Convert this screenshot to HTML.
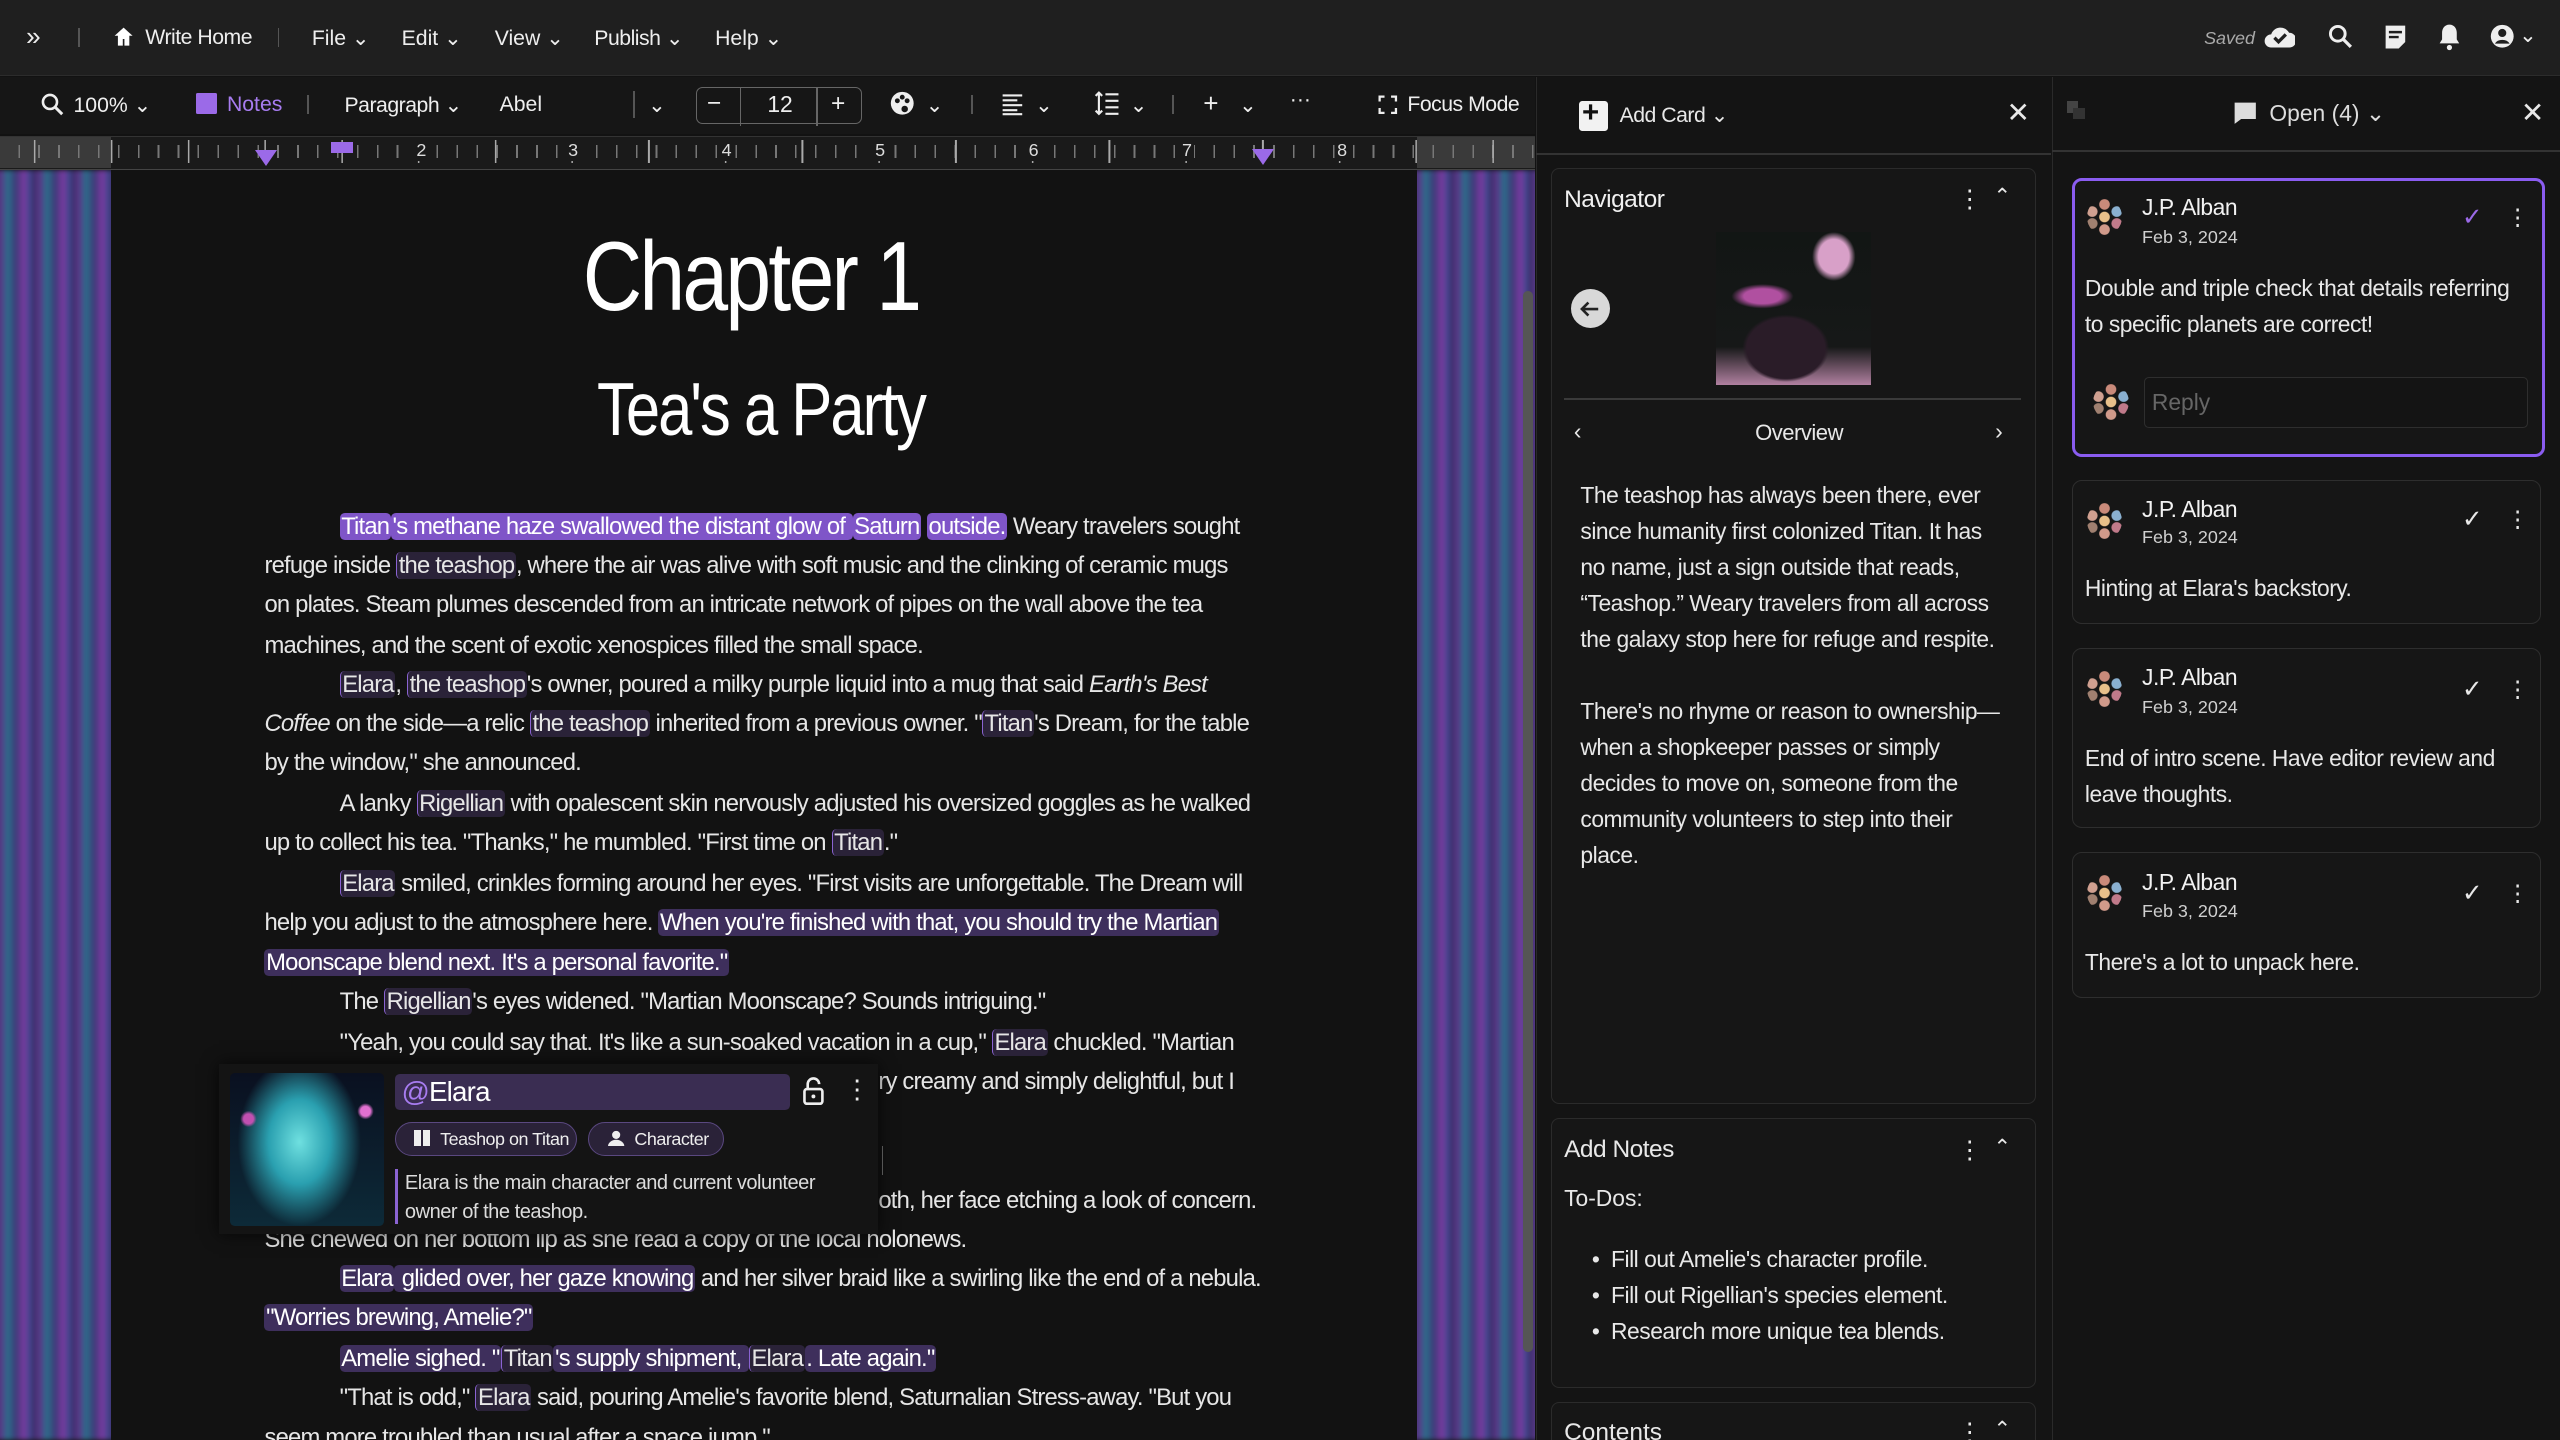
<!DOCTYPE html>
<html><head><meta charset="utf-8"><style>
html,body{margin:0;padding:0;width:2560px;height:1440px;overflow:hidden;background:#121212}
#r{zoom:1.632653;width:1568px;height:882px;position:relative;overflow:hidden;font-family:"Liberation Sans",sans-serif;color:#e8e8e8;background:#121212}
.a{position:absolute}
.t{position:absolute;white-space:nowrap}
.top{left:0;top:0;width:1568px;height:46px;background:#1f1f1f;border-bottom:1px solid #2c2c2c}
.menu{font-size:13px;top:16px;color:#eee}
.tb{left:0;top:47px;width:940px;height:35px;background:#161616}
.tbx{font-size:13px;top:57px;color:#eee}
.ruler{left:0;top:83px;width:940px;height:20px;background:#1a1a1a;border-top:1px solid #333;border-bottom:1px solid #444}
.stripe{background:repeating-linear-gradient(90deg,#3b2a66 0,#5a3a8a 5px,#2a6f8a 9px,#3e3a78 14px,#7a3aa0 19px,#2f4a86 24px);filter:blur(1.5px)}
.ed{left:68px;top:104px;width:800px;height:778px;background:#121212}
.ln{position:absolute;left:162px;font-size:14.6px;white-space:nowrap;color:#e6e6e6;letter-spacing:-.5px}
.hs{background:#7f55c8;border-radius:3px;padding:0 1px;color:#fff}
.hl{background:#2a2238;border-left:1px solid #8a63d2;border-radius:3px;padding:0 1px}
.panel{background:#141414}
.card{position:absolute;background:#161616;border:1px solid #2b2b2b;border-radius:5px}
.cm{position:absolute;left:1269px;width:286px;background:#161616;border:1px solid #2e2e2e;border-radius:6px}
.av{position:absolute;width:22px;height:22px;border-radius:50%;background:radial-gradient(circle,#e8c08a 0 3px,transparent 3.5px),radial-gradient(circle at 50% 15%,#c98a7a 0 3px,transparent 3.5px),radial-gradient(circle at 85% 35%,#8ab0d0 0 3px,transparent 3.5px),radial-gradient(circle at 85% 68%,#c07a8a 0 3px,transparent 3.5px),radial-gradient(circle at 50% 85%,#d09a8a 0 3px,transparent 3.5px),radial-gradient(circle at 15% 68%,#a08070 0 3px,transparent 3.5px),radial-gradient(circle at 15% 35%,#d0a090 0 3px,transparent 3.5px)}
.nm{font-size:14px;color:#f2f2f2;letter-spacing:-.3px}
.dt{font-size:11px;color:#cfcfcf}
.bd{font-size:14px;color:#e8e8e8;line-height:22px;letter-spacing:-.3px}
.chip{position:absolute;top:687px;height:20px;border:1px solid #5a4880;background:#2a2238;border-radius:11px;font-size:11px;color:#eee;line-height:20px;white-space:nowrap;letter-spacing:-.3px}
</style></head><body><div id="r">

<div class="a top"></div>
<div class="t menu" style="left:16px;top:13px;font-size:16px">»</div>
<div class="a" style="left:48px;top:17px;width:1px;height:12px;background:#555"></div>
<svg class="a" style="left:69px;top:16px" width="13" height="13" viewBox="0 0 13 13"><path d="M6.5 1L1 6h2v6h3V8h1v4h3V6h2z" fill="#fff"/></svg>
<div class="t menu" style="left:89px;letter-spacing:-.3px">Write Home</div>
<div class="a" style="left:170px;top:17px;width:1px;height:12px;background:#555"></div>
<div class="t menu" style="left:191px">File ⌄</div>
<div class="t menu" style="left:246px">Edit ⌄</div>
<div class="t menu" style="left:303px">View ⌄</div>
<div class="t menu" style="left:364px;letter-spacing:-.3px">Publish ⌄</div>
<div class="t menu" style="left:438px">Help ⌄</div>
<div class="t" style="left:1350px;top:17px;font-size:11px;font-style:italic;color:#aaa">Saved</div>
<svg class="a" style="left:1386px;top:14px" width="20" height="16" viewBox="0 0 20 16"><path d="M5 15a4 4 0 010-8 6 6 0 0111-1 4.5 4.5 0 010 9z" fill="#eee"/><path d="M7 9l2.5 2.5L14 7" stroke="#1f1f1f" stroke-width="2" fill="none"/></svg>
<svg class="a" style="left:1426px;top:15px" width="15" height="15" viewBox="0 0 15 15"><circle cx="6" cy="6" r="4.5" stroke="#eee" stroke-width="1.8" fill="none"/><path d="M9.5 9.5L14 14" stroke="#eee" stroke-width="2"/></svg>
<svg class="a" style="left:1460px;top:15px" width="14" height="16" viewBox="0 0 14 16"><path d="M1 1h12v10l-4 4H1z" fill="#eee"/><path d="M3 5h8M3 8h6" stroke="#1f1f1f" stroke-width="1.5"/></svg>
<svg class="a" style="left:1493px;top:14px" width="14" height="17" viewBox="0 0 14 17"><path d="M7 1c-3 0-4.5 2.5-4.5 5v4L1 12.5h12L11.5 10V6C11.5 3.5 10 1 7 1z" fill="#eee"/><circle cx="7" cy="15" r="1.6" fill="#eee"/></svg>
<svg class="a" style="left:1525px;top:15px" width="15" height="15" viewBox="0 0 15 15"><circle cx="7.5" cy="7.5" r="7" fill="#eee"/><circle cx="7.5" cy="5.5" r="2.5" fill="#1f1f1f"/><path d="M3 12a5 4 0 019 0" fill="#1f1f1f"/></svg>
<div class="t menu" style="left:1543px;top:14px">⌄</div>

<div class="a tb"></div>
<svg class="a" style="left:25px;top:57px" width="14" height="14" viewBox="0 0 14 14"><circle cx="5.5" cy="5.5" r="4.3" stroke="#eee" stroke-width="1.6" fill="none"/><path d="M9 9l4 4" stroke="#eee" stroke-width="1.8"/></svg>
<div class="t tbx" style="left:45px">100% ⌄</div>
<div class="a" style="left:120px;top:57px;width:13px;height:13px;background:#9b6ae8;border-radius:1px"></div>
<div class="t tbx" style="left:139px;color:#a77cf0">Notes</div>
<div class="a" style="left:188px;top:58px;width:1px;height:12px;background:#555"></div>
<div class="t tbx" style="left:211px;letter-spacing:-.3px">Paragraph ⌄</div>
<div class="t tbx" style="left:306px">Abel</div>
<div class="a" style="left:388px;top:56px;width:1px;height:16px;background:#555"></div>
<div class="t tbx" style="left:397px">⌄</div>
<div class="a" style="left:426px;top:53px;width:101px;height:22px;border:1px solid #666;border-radius:4px"></div>
<div class="a" style="left:453px;top:53px;width:1px;height:24px;background:#666"></div>
<div class="a" style="left:500px;top:53px;width:1px;height:24px;background:#666"></div>
<div class="t tbx" style="left:433px;top:55px;font-size:15px">−</div>
<div class="t tbx" style="left:470px;top:56px;font-size:14px">12</div>
<div class="t tbx" style="left:509px;top:55px;font-size:15px">+</div>
<svg class="a" style="left:545px;top:56px" width="15" height="15" viewBox="0 0 15 15"><circle cx="7.5" cy="7.5" r="7" fill="#eee"/><circle cx="4.5" cy="6" r="1.5" fill="#161616"/><circle cx="7.5" cy="3.8" r="1.5" fill="#161616"/><circle cx="10.5" cy="6" r="1.5" fill="#161616"/><circle cx="9" cy="11" r="2" fill="#161616"/></svg>
<div class="t tbx" style="left:567px">⌄</div>
<div class="a" style="left:595px;top:58px;width:1px;height:12px;background:#555"></div>
<svg class="a" style="left:613px;top:57px" width="14" height="14" viewBox="0 0 14 14"><path d="M1 1.5h12M1 4.5h9M1 7.5h12M1 10.5h9M1 13h12" stroke="#eee" stroke-width="1.3"/></svg>
<div class="t tbx" style="left:634px">⌄</div>
<svg class="a" style="left:670px;top:56px" width="16" height="15" viewBox="0 0 16 15"><path d="M3 1v13M1 3l2-2 2 2M1 12l2 2 2-2M7 2h8M7 6h8M7 10h8M7 14h8" stroke="#eee" stroke-width="1.3" fill="none"/></svg>
<div class="t tbx" style="left:692px">⌄</div>
<div class="a" style="left:718px;top:58px;width:1px;height:12px;background:#555"></div>
<div class="t tbx" style="left:737px;top:54px;font-size:16px">+</div>
<div class="t tbx" style="left:759px">⌄</div>
<div class="t tbx" style="left:790px;top:54px">···</div>
<svg class="a" style="left:844px;top:58px" width="12" height="12" viewBox="0 0 12 12"><path d="M1 4V1h3M8 1h3v3M11 8v3H8M4 11H1V8" stroke="#eee" stroke-width="1.4" fill="none"/></svg>
<div class="t tbx" style="left:862px;letter-spacing:-.3px">Focus Mode</div>

<div class="a ruler"></div>
<div class="a" style="left:0;top:84px;width:68px;height:19px;background:#3a3a3a"></div>
<div class="a" style="left:868px;top:84px;width:72px;height:19px;background:#3a3a3a"></div>
<div class="a" style="left:0;top:89px;width:940px;height:8px;background:repeating-linear-gradient(90deg,transparent 0,transparent 11.2px,#777 11.2px,#777 12.2px)"></div>
<div class="a" style="left:0;top:86px;width:940px;height:14px;background:repeating-linear-gradient(90deg,transparent 0,transparent 46px,#aaa 46px,#aaa 47px);background-position:22px 0"></div>
<div class="t" style="left:254px;top:86px;font-size:11px;color:#ddd;background:#1a1a1a;padding:0 1px">2</div>
<div class="t" style="left:347px;top:86px;font-size:11px;color:#ddd;background:#1a1a1a;padding:0 1px">3</div>
<div class="t" style="left:441px;top:86px;font-size:11px;color:#ddd;background:#1a1a1a;padding:0 1px">4</div>
<div class="t" style="left:535px;top:86px;font-size:11px;color:#ddd;background:#1a1a1a;padding:0 1px">5</div>
<div class="t" style="left:629px;top:86px;font-size:11px;color:#ddd;background:#1a1a1a;padding:0 1px">6</div>
<div class="t" style="left:723px;top:86px;font-size:11px;color:#ddd;background:#1a1a1a;padding:0 1px">7</div>
<div class="t" style="left:818px;top:86px;font-size:11px;color:#ddd;background:#1a1a1a;padding:0 1px">8</div>
<div class="a" style="left:156px;top:92px;width:0;height:0;border-left:7px solid transparent;border-right:7px solid transparent;border-top:10px solid #9b6ae8"></div>
<div class="a" style="left:767px;top:91px;width:0;height:0;border-left:7px solid transparent;border-right:7px solid transparent;border-top:10px solid #9b6ae8"></div>
<div class="a" style="left:203px;top:87px;width:13px;height:7px;background:#9b6ae8"></div>

<div class="a" style="left:0;top:104px;width:68px;height:778px;overflow:hidden"><div class="a stripe" style="left:-4px;top:0;width:76px;height:778px"></div></div>
<div class="a" style="left:868px;top:104px;width:72px;height:778px;overflow:hidden"><div class="a stripe" style="left:-4px;top:0;width:80px;height:778px"></div></div>
<div class="a ed"></div>
<div class="a" style="left:933px;top:178px;width:6px;height:650px;background:#555;border-radius:3px"></div>

<div class="t" style="left:0;width:920px;text-align:center;top:135px;font-size:60px;color:#fff;letter-spacing:-2px;transform:scaleX(.84)">Chapter 1</div>
<div class="t" style="left:6px;width:920px;text-align:center;top:224px;font-size:46px;color:#fff;letter-spacing:-1.5px;transform:scaleX(.82)">Tea's a Party</div>

<div class="ln" style="top:314px;left:208px"><span class="hs">Titan</span><span class="hs">'s methane haze swallowed the distant glow of </span><span class="hs">Saturn</span> <span class="hs">outside.</span> Weary travelers sought</div>
<div class="ln" style="top:338px">refuge inside <span class="hl">the teashop</span>, where the air was alive with soft music and the clinking of ceramic mugs</div>
<div class="ln" style="top:362px">on plates. Steam plumes descended from an intricate network of pipes on the wall above the tea</div>
<div class="ln" style="top:387px">machines, and the scent of exotic xenospices filled the small space.</div>
<div class="ln" style="top:411px;left:208px"><span class="hl">Elara</span>, <span class="hl">the teashop</span>'s owner, poured a milky purple liquid into a mug that said <i>Earth's Best</i></div>
<div class="ln" style="top:435px"><i>Coffee</i> on the side—a relic <span class="hl">the teashop</span> inherited from a previous owner. "<span class="hl">Titan</span>'s Dream, for the table</div>
<div class="ln" style="top:459px">by the window," she announced.</div>
<div class="ln" style="top:484px;left:208px">A lanky <span class="hl">Rigellian</span> with opalescent skin nervously adjusted his oversized goggles as he walked</div>
<div class="ln" style="top:508px">up to collect his tea. "Thanks," he mumbled. "First time on <span class="hl">Titan</span>."</div>
<div class="ln" style="top:533px;left:208px"><span class="hl">Elara</span> smiled, crinkles forming around her eyes. "First visits are unforgettable. The Dream will</div>
<div class="ln" style="top:557px">help you adjust to the atmosphere here. <span class="hs" style="background:#3e2f5c">When you're finished with that, you should try the Martian</span></div>
<div class="ln" style="top:581px"><span class="hs" style="background:#3e2f5c">Moonscape blend next. It's a personal favorite."</span></div>
<div class="ln" style="top:605px;left:208px">The <span class="hl">Rigellian</span>'s eyes widened. "Martian Moonscape? Sounds intriguing."</div>
<div class="ln" style="top:630px;left:208px">"Yeah, you could say that. It's like a sun-soaked vacation in a cup," <span class="hl">Elara</span> chuckled.  "Martian</div>
<div class="ln" style="top:654px;left:538px">ry creamy and simply delightful, but I</div>
<div class="ln" style="top:727px;left:538px">oth, her face etching a look of concern.</div>
<div class="ln" style="top:751px">She chewed on her bottom lip as she read a copy of the local holonews.</div>
<div class="ln" style="top:775px;left:208px"><span class="hs" style="background:#3e2f5c">Elara</span><span class="hs" style="background:#3e2f5c"> glided over, her gaze knowing</span> and her silver braid like a swirling like the end of a nebula.</div>
<div class="ln" style="top:799px"><span class="hs" style="background:#3e2f5c">"Worries brewing, Amelie?"</span></div>
<div class="ln" style="top:824px;left:208px"><span class="hs" style="background:#3e2f5c">Amelie sighed. "</span><span class="hl">Titan</span><span class="hs" style="background:#3e2f5c">'s supply shipment, </span><span class="hl">Elara</span><span class="hs" style="background:#3e2f5c">. Late again."</span></div>
<div class="ln" style="top:848px;left:208px">"That is odd," <span class="hl">Elara</span> said, pouring Amelie's favorite blend, Saturnalian Stress-away. "But you</div>
<div class="ln" style="top:872px">seem more troubled than usual after a space jump."</div>

<div class="a" style="left:134px;top:652px;width:404px;height:104px;background:#141414;box-shadow:0 0 10px rgba(0,0,0,.7)"></div>
<div class="a" style="left:141px;top:657px;width:94px;height:94px;border-radius:3px;background:radial-gradient(circle at 88% 25%,#e070d0 0 3px,transparent 5px),radial-gradient(circle at 12% 30%,#c050b0 0 3px,transparent 5px),radial-gradient(ellipse 40% 55% at 45% 45%,#6fe0e0 0,#2aa0b0 50%,transparent 100%),linear-gradient(#0a1020,#0d2a38)"></div>
<div class="a" style="left:242px;top:658px;width:242px;height:22px;background:#3a2d52;border-radius:3px"></div>
<div class="t" style="left:246px;top:659px;font-size:17px;color:#fff;letter-spacing:-.5px"><span style="color:#a77cf0">@</span>Elara</div>
<svg class="a" style="left:491px;top:659px" width="14" height="18" viewBox="0 0 14 18"><path d="M3.5 8V5a3.5 3.5 0 017 0" stroke="#eee" stroke-width="1.6" fill="none"/><rect x="1.5" y="8" width="11" height="9" rx="1.5" stroke="#eee" stroke-width="1.6" fill="none"/><circle cx="7" cy="12.5" r="1.2" fill="#eee"/></svg>
<div class="t" style="left:517px;top:658px;font-size:16px;color:#eee">⋮</div>
<div class="chip" style="left:242px;width:110px"><span style="display:inline-block;margin:0 6px 0 11px;width:10px;height:10px;background:linear-gradient(90deg,#eee 45%,transparent 45% 55%,#eee 55%);vertical-align:-1px"></span>Teashop on Titan</div>
<div class="chip" style="left:360px;width:82px"><svg style="margin:0 6px 0 12px;vertical-align:-1px" width="10" height="10" viewBox="0 0 10 10"><circle cx="5" cy="3" r="2.5" fill="#eee"/><path d="M0 10a5 4 0 0110 0z" fill="#eee"/></svg>Character</div>
<div class="a" style="left:242px;top:716px;width:2px;height:34px;background:#8a63d2"></div>
<div class="t" style="left:248px;top:716px;font-size:12.3px;color:#ddd;line-height:18px;letter-spacing:-.3px">Elara is the main character and current volunteer<br>owner of the teashop.</div>
<div class="a" style="left:540px;top:702px;width:1px;height:18px;background:#555"></div>

<div class="a panel" style="left:941px;top:47px;width:315px;height:835px;border-left:1px solid #2a2a2a"></div>
<div class="a" style="left:941px;top:94px;width:315px;height:1px;background:#333"></div>
<div class="a" style="left:967px;top:62px;width:18px;height:18px;background:#f2f2f2;border-radius:2px"></div>
<div class="t" style="left:969px;top:59px;font-size:18px;color:#111;font-weight:bold">+</div>
<div class="t" style="left:992px;top:63px;font-size:13px;letter-spacing:-.3px">Add Card ⌄</div>
<div class="t" style="left:1229px;top:59px;font-size:17px">✕</div>

<div class="card" style="left:950px;top:103px;width:296px;height:572px"></div>
<div class="t" style="left:958px;top:114px;font-size:15px;color:#f0f0f0;letter-spacing:-.3px">Navigator</div>
<div class="t" style="left:1199px;top:113px;font-size:15px">⋮</div>
<div class="t" style="left:1221px;top:113px;font-size:13px">⌃</div>
<div class="a" style="left:962px;top:177px;width:24px;height:24px;border-radius:50%;background:#d8d8d8"></div>
<svg class="a" style="left:966px;top:181px" width="16" height="16" viewBox="0 0 16 16"><path d="M13 8H3M7 4L3 8l4 4" stroke="#222" stroke-width="1.6" fill="none"/></svg>
<div class="a" style="left:1051px;top:142px;width:95px;height:94px;background:radial-gradient(ellipse 28% 22% at 45% 76%,#2a1c28 0 90%,transparent 100%),radial-gradient(ellipse 14% 16% at 76% 16%,#d8a0c8 0 70%,transparent 100%),radial-gradient(ellipse 20% 8% at 30% 42%,#b050a0 0 60%,transparent 100%),linear-gradient(#121614,#161818 75%,#b080a0)"></div>
<div class="a" style="left:958px;top:244px;width:280px;height:1px;background:#3a3a3a"></div>
<div class="t" style="left:964px;top:256px;font-size:14px">‹</div>
<div class="t" style="left:1075px;top:257px;font-size:13.5px;letter-spacing:-.3px">Overview</div>
<div class="t" style="left:1222px;top:256px;font-size:14px">›</div>
<div class="t bd" style="left:968px;top:293px">The teashop has always been there, ever<br>since humanity first colonized Titan. It has<br>no name, just a sign outside that reads,<br>“Teashop.” Weary travelers from all across<br>the galaxy stop here for refuge and respite.<br><br>There's no rhyme or reason to ownership—<br>when a shopkeeper passes or simply<br>decides to move on, someone from the<br>community volunteers to step into their<br>place.</div>

<div class="card" style="left:950px;top:685px;width:296px;height:164px"></div>
<div class="t" style="left:958px;top:696px;font-size:15px;letter-spacing:-.3px">Add Notes</div>
<div class="t" style="left:1199px;top:695px;font-size:15px">⋮</div>
<div class="t" style="left:1221px;top:695px;font-size:13px">⌃</div>
<div class="t" style="left:958px;top:726px;font-size:14px">To-Dos:</div>
<div class="t bd" style="left:975px;top:761px">•&nbsp;&nbsp;Fill out Amelie's character profile.<br>•&nbsp;&nbsp;Fill out Rigellian's species element.<br>•&nbsp;&nbsp;Research more unique tea blends.</div>
<div class="card" style="left:950px;top:859px;width:296px;height:40px"></div>
<div class="t" style="left:958px;top:869px;font-size:15px">Contents</div>
<div class="t" style="left:1199px;top:868px;font-size:15px">⋮</div>
<div class="t" style="left:1221px;top:868px;font-size:13px">⌃</div>

<div class="a panel" style="left:1257px;top:47px;width:311px;height:835px;border-left:1px solid #2a2a2a"></div>
<div class="a" style="left:1257px;top:92px;width:311px;height:1px;background:#333"></div>
<div class="a" style="left:1266px;top:62px;width:7px;height:7px;background:#444"></div>
<div class="a" style="left:1270px;top:66px;width:7px;height:7px;background:#333"></div>
<svg class="a" style="left:1368px;top:62px" width="15" height="15" viewBox="0 0 15 15"><path d="M1 1h13v10H5l-4 3z" fill="#ddd"/></svg>
<div class="t" style="left:1390px;top:61px;font-size:14px;color:#ddd">Open (4) ⌄</div>
<div class="t" style="left:1544px;top:59px;font-size:17px">✕</div>

<div class="cm" style="top:109px;height:167px;border:2px solid #8a5cf0"></div>
<div class="av" style="left:1278px;top:122px"></div>
<div class="t nm" style="left:1312px;top:119px">J.P. Alban</div>
<div class="t dt" style="left:1312px;top:139px">Feb 3, 2024</div>
<div class="t" style="left:1508px;top:124px;font-size:15px;color:#9b6ae8">✓</div>
<div class="t" style="left:1535px;top:125px;font-size:14px">⋮</div>
<div class="t bd" style="left:1277px;top:166px">Double and triple check that details referring<br>to specific planets are correct!</div>
<div class="av" style="left:1282px;top:235px"></div>
<div class="a" style="left:1313px;top:231px;width:234px;height:30px;border:1px solid #2e2e2e;background:#141414;border-radius:3px"></div>
<div class="t" style="left:1318px;top:238px;font-size:14px;color:#666">Reply</div>

<div class="cm" style="top:294px;height:87px"></div>
<div class="av" style="left:1278px;top:308px"></div>
<div class="t nm" style="left:1312px;top:304px">J.P. Alban</div>
<div class="t dt" style="left:1312px;top:323px">Feb 3, 2024</div>
<div class="t" style="left:1508px;top:309px;font-size:15px">✓</div>
<div class="t" style="left:1535px;top:310px;font-size:14px">⋮</div>
<div class="t bd" style="left:1277px;top:350px">Hinting at Elara's backstory.</div>

<div class="cm" style="top:397px;height:109px"></div>
<div class="av" style="left:1278px;top:411px"></div>
<div class="t nm" style="left:1312px;top:407px">J.P. Alban</div>
<div class="t dt" style="left:1312px;top:427px">Feb 3, 2024</div>
<div class="t" style="left:1508px;top:413px;font-size:15px">✓</div>
<div class="t" style="left:1535px;top:414px;font-size:14px">⋮</div>
<div class="t bd" style="left:1277px;top:454px">End of intro scene. Have editor review and<br>leave thoughts.</div>

<div class="cm" style="top:522px;height:88px"></div>
<div class="av" style="left:1278px;top:536px"></div>
<div class="t nm" style="left:1312px;top:532px">J.P. Alban</div>
<div class="t dt" style="left:1312px;top:552px">Feb 3, 2024</div>
<div class="t" style="left:1508px;top:538px;font-size:15px">✓</div>
<div class="t" style="left:1535px;top:539px;font-size:14px">⋮</div>
<div class="t bd" style="left:1277px;top:579px">There's a lot to unpack here.</div>

</div></body></html>
